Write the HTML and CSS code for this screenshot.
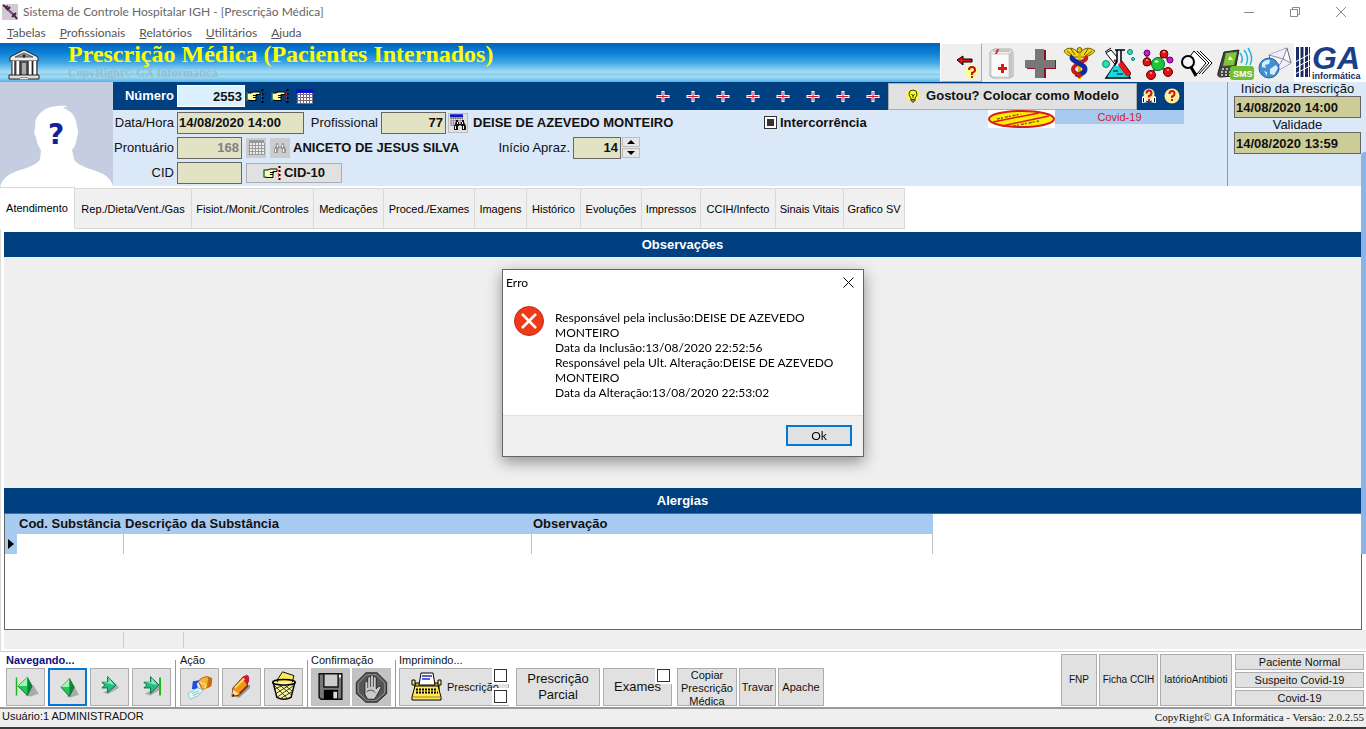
FILE: index.html
```html
<!DOCTYPE html>
<html lang="pt-BR">
<head>
<meta charset="utf-8">
<title>Sistema de Controle Hospitalar IGH - [Prescrição Médica]</title>
<link rel="stylesheet" href="styles.css">
</head>
<body>
<svg class="sprites" aria-hidden="true">
  <symbol id="i-hand" viewBox="0 0 18 14">
    <path d="M1 4h4l2-1h7v2.500h-4v6h-5l-4-.5z" fill="#ffffa0" stroke="#000"/>
    <path d="M7 6.500h4M7 8.500h3" stroke="#000" fill="none"/>
    <path d="M1 3v9" stroke="#2a9" fill="none"/>
    <path d="M16.500 0v14" stroke="#000" stroke-width="2" stroke-dasharray="2 2"/>
    <path d="M15.500 4v7" stroke="#d22" stroke-dasharray="2 1"/>
  </symbol>
  <symbol id="i-cal" viewBox="0 0 17 15">
    <path d="M1 1h15v13h-15z" fill="#fff"/>
    <path d="M.500 5.500h16M.500 8.500h16M.500 11.500h16M.500 14.500h16M1.500 3v12M4.500 3v12M7.500 3v12M10.500 3v12M13.500 3v12M16.500 3v12" stroke="#7d6a78" fill="none"/>
    <path d="M0 0h17v4h-17z" fill="#0a14c8"/>
  </symbol>
  <symbol id="i-calgray" viewBox="0 0 17 15">
    <path d="M1 1h15v13h-15z" fill="#eee"/><path d="M1 0h15v3h-15z" fill="#999"/>
    <path d="M.500 5.500h16M.500 8.500h16M.500 11.500h16M.500 14.500h16M1.500 3v12M4.500 3v12M7.500 3v12M10.500 3v12M13.500 3v12M16.500 3v12" stroke="#999" fill="none"/>
  </symbol>
  <symbol id="i-bino" viewBox="0 0 14 12">
    <path d="M3 1h2v2h1v2h2v-2h1v-2h2v2l2 4v4h-4v-4h-1v-1h-2v1h-1v4h-4v-4l2-4z" fill="currentColor"/>
    <path d="M2.500 7v3M10.500 7v3M4.500 3v2M9.500 3v2" stroke="#fff"/>
  </symbol>
  <symbol id="i-plus" viewBox="0 0 13 11">
    <path d="M5 0h3v4h5v3h-5v4h-3v-4h-5v-3h5z" fill="#fff"/><path d="M6 1h1v4h5v1h-5v4h-1v-4h-5v-1h5z" fill="#d8162c"/>
  </symbol>
</svg>

<header class="titlebar">
  <svg class="app-icon" viewBox="0 0 16 16"><path d="M0 0h16v16h-16z" fill="#cfcbd0"/><path d="M1 1l4 3M3 4l3-2M4 4l8 7M5 6l3-3M10 13l4-4M12 11l3 4" stroke="#4b1d4c" stroke-width="2"/><path d="M6 6l5 4" stroke="#b06a9c"/></svg>
  <span class="title">Sistema de Controle Hospitalar IGH - [Prescrição Médica]</span>
  <button class="win" aria-label="Minimizar"><svg viewBox="0 0 10 10"><path d="M0 5.500h10"/></svg></button>
  <button class="win" aria-label="Restaurar"><svg viewBox="0 0 10 10"><path d="M.500 2.500h7v7h-7zM2.500 2v-1.500h7v7h-2"/></svg></button>
  <button class="win" aria-label="Fechar"><svg viewBox="0 0 10 10"><path d="M0 0l10 10M10 0l-10 10"/></svg></button>
</header>

<nav class="menubar">
  <a href="#"><u>T</u>abelas</a><a href="#"><u>P</u>rofissionais</a><a href="#"><u>R</u>elatórios</a><a href="#"><u>U</u>tilitários</a><a href="#"><u>A</u>juda</a>
</nav>

<div class="banner">
  <svg class="bank" viewBox="0 0 34 32">
    <path d="M17 1l14 7v4h-28v-4z" fill="#eee" stroke="#222"/><path d="M17 4l9 4h-18z" fill="#999" stroke="#555"/><circle cx="17" cy="7" r="1.500" fill="#222"/>
    <path d="M4 12h26v14h-26z" fill="#555"/>
    <path d="M6 12v14M11 12v14M23 12v14M28 12v14" stroke="#fff" stroke-width="3"/><path d="M15 14h4v12h-4z" fill="#aaa"/>
    <path d="M5 12v14M8 12v14M13 12v14M21 12v14M25.500 12v14M30 12v14" stroke="#222"/>
    <path d="M2 26h30v4h-30z" fill="#ddd" stroke="#222"/><path d="M13 26h8v5h-8z" fill="#888"/><path d="M13 27.500h8M13 29.500h8" stroke="#eee"/>
  </svg>
  <div class="banner-text"><h1>Prescrição Médica (Pacientes Internados)</h1><p>CopyRight© GA Informática</p></div>
  <div class="tools">
    <button class="tool exit" aria-label="Sair"><svg viewBox="0 0 39 38"><path d="M37 28a6.500 7 0 1 1-13 0a6.500 7 0 1 1 13 0z" fill="#ffff8c"/><path d="M16 16l6-4v3h9v3h-9v3z" fill="#e01010" stroke="#000"/><path d="M28 26q0-3 3-3t3 3q0 2-3 3v2" fill="none" stroke="#c41010" stroke-width="2"/><path d="M30 32h2v2h-2z" fill="#c41010"/></svg></button>
    <button class="tool" aria-label="Prontuário"><svg viewBox="0 0 39 38"><path d="M8 8l4-3h17l2 4v23l-3 2h-17l-3-2z" fill="#eee" stroke="#aaa"/><path d="M9 10h18v23h-16l-2-2z" fill="#fafafa" stroke="#ccc"/><path d="M27 10l3-3v25l-3 2z" fill="#c4c4c4"/><path d="M11 7h17" stroke="#999"/><path d="M13 10l2-5h2l-2 5z" fill="#d22"/><path d="M19 20h3v3h3v3h-3v3h-3v-3h-3v-3h3z" fill="#e01515"/></svg></button>
    <button class="tool" aria-label="Hospital"><svg viewBox="0 0 39 38"><path d="M16 6h9v10h10v9h-10v9h-9v-9h-10v-9h10z" fill="#900d20"/><path d="M14 5h9v11h11v8h-11v10h-9v-10h-10v-8h10z" fill="#777"/></svg></button>
    <button class="tool" aria-label="Caduceu"><svg viewBox="0 0 39 38"><path d="M18 9C14 3 8 3 4 7c2 4 8 7 14 6M20 9c4-6 10-6 15-2c-3 4-9 7-15 6" fill="#f6d51a" stroke="#6b5900"/><path d="M7 7l5 4M11 5l4 6M32 7l-5 4M28 5l-4 6" stroke="#6b5900"/><path d="M19.500 5v30" stroke="#d8b400" stroke-width="3"/><path d="M13 12c-5 5 12 7 12 13s-6 3-8 8" fill="none" stroke="#152b9c" stroke-width="5"/><path d="M25 12c6 5-12 7-12 13s6 3 8 8" fill="none" stroke="#c71c1c" stroke-width="4"/><path d="M15 18q8 2 10 6" fill="none" stroke="#152b9c" stroke-width="4"/><circle cx="19.500" cy="6" r="2.500" fill="#e7c416" stroke="#6b5900"/></svg></button>
    <button class="tool" aria-label="Laboratório"><svg viewBox="0 0 39 38"><path d="M7 9l5-3 19 22q1 6-5 5z" fill="#fff" stroke="#000"/><path d="M15 16l8 1 8 11q1 6-5 5z" fill="#e11c1c" stroke="#700"/><path d="M16 6h10M18 6v12l-11 16h24l-9-16v-12" fill="#eef" stroke="#000" stroke-width="1.500"/><path d="M15 22h9l6 11h-22z" fill="#18d7e0"/><path d="M22 17l9 12q0 4-4 3l-8-11z" fill="#e11c1c"/><path d="M6 8l6-4M14 27h5M18 30h6" stroke="#000"/><circle cx="31" cy="8" r="2.500" fill="#2de0b0" stroke="#087"/><circle cx="34" cy="15" r="1.500" fill="#2de0b0" stroke="#087"/><circle cx="7" cy="20" r="3.500" fill="#2de0b0" stroke="#087"/></svg></button>
    <button class="tool" aria-label="Moléculas"><svg viewBox="0 0 39 38"><path d="M9 10v8l11 2 5-10 7 7M20 20l9 8M20 20l-7 11" stroke="#666" stroke-width="3" fill="none"/><circle cx="9" cy="9" r="3" fill="#cc18d0" stroke="#606"/><circle cx="9" cy="18" r="4" fill="#e01212" stroke="#600"/><circle cx="26" cy="10" r="4" fill="#e01212" stroke="#600"/><circle cx="32" cy="16" r="3" fill="#cc18d0" stroke="#606"/><circle cx="20" cy="20" r="6.500" fill="#1fc534" stroke="#064"/><circle cx="13" cy="31" r="4.500" fill="#e01212" stroke="#600"/><circle cx="30" cy="28" r="4.500" fill="#e01212" stroke="#600"/><path d="M17 17h3v1h-3zM12 29h2M29 26h2M25 8h2M8 16h2" stroke="#fff" fill="#fff"/></svg></button>
    <button class="tool" aria-label="Pesquisar"><svg viewBox="0 0 39 38"><path d="M23 7l12 12-10 11M20 7l12 12-10 11" fill="#fff" stroke="#000"/><path d="M17 7l12 12-9 11-11-12z" fill="#fff" stroke="#000"/><circle cx="11" cy="18" r="6" fill="#f5f5f5" stroke="#000" stroke-width="2"/><path d="M14 23l5 9" stroke="#000" stroke-width="3"/></svg></button>
    <button class="tool" aria-label="SMS"><svg viewBox="0 0 39 38"><path d="M8 8l15-2-5 26-13 1q-4 0-3-4z" fill="#444" stroke="#222"/><path d="M10 9l11-1-3 13-11 1z" fill="#7dc832"/><path d="M14 12l3 4h-5z" fill="#fff"/><path d="M6 25h10M5 28h10M5 31h9" stroke="#bbb" stroke-width="2" stroke-dasharray="2 2"/><path d="M24 9q4 5 1 10M28 6q6 7 2 15M32 4q6 9 2 17" fill="none" stroke="#23b5d6" stroke-width="1.500"/><rect x="14" y="22" width="24" height="14" rx="3" fill="#6fbe36"/><text class="sms" x="17" y="33">SMS</text></svg></button>
    <button class="tool" aria-label="E-mail"><svg viewBox="0 0 39 38"><path d="M14 11l18-7 4 15-16 9z" fill="#fff" stroke="#667"/><path d="M14 11l14 4 4-11M20 28l8-13 8 4" fill="#eef" stroke="#889"/><circle cx="14" cy="24" r="10" fill="#438fd5" stroke="#2862ab"/><path d="M7 19q4-4 8-3l-1 4-4 1 1 3-4-1zM15 25l6-4 2 3-4 7-4-1zM9 27l3 1v4z" fill="#d8edfa"/></svg></button>
    <div class="logo"><svg viewBox="0 0 72 38"><path d="M2 4h3v30h-3zM6.500 4h3v30h-3zM11 4h3v30h-3zM15 4h1v30h-1z" fill="#182b63"/><path d="M1 19l15-8M1 25l15-8M1 31l15-8" stroke="#fff"/><text class="logo-ga" x="18" y="26">GA</text><text class="logo-inf" x="18" y="36">informática</text></svg></div>
  </div>
</div>

<section class="patient">
  <svg class="avatar" viewBox="0 0 113 104"><path d="M0 0h113v104h-113z" fill="#c5cde1"/><path d="M0 104q3-10 17-15q21-6 23-12l1-9q-4-5-5-13q-3-4-1-9q-1-12 9-18q8-5 24-4l-5 2q13 4 14 19q2 6 0 10q-1 9-5 13l2 9q2 6 22 12q15 5 17 15z" fill="#fff"/><text class="qmark" x="56" y="62">?</text></svg>
  <div class="fields">
    <div class="numbar">
      <label class="lab" for="numero">Número</label><input id="numero" class="in w68 light" value="2553">
      <button class="ic" aria-label="Anterior"><svg width="18" height="14"><use href="#i-hand"/></svg></button>
      <button class="ic" aria-label="Próximo"><svg width="18" height="14"><use href="#i-hand"/></svg></button>
      <button class="ic" aria-label="Calendário"><svg width="17" height="15"><use href="#i-cal"/></svg></button>
      <div class="pluses">
        <svg><use href="#i-plus"/></svg><svg><use href="#i-plus"/></svg><svg><use href="#i-plus"/></svg><svg><use href="#i-plus"/></svg><svg><use href="#i-plus"/></svg><svg><use href="#i-plus"/></svg><svg><use href="#i-plus"/></svg><svg><use href="#i-plus"/></svg>
      </div>
      <button class="btn model"><svg width="14" height="16" viewBox="0 0 14 16"><circle cx="7" cy="7" r="6.500" fill="#ffff28"/><path d="M5 10q-2-2-2-4a4 4 0 0 1 8 0q0 2-2 4v3h-4zM5 11.500h4M7 13v2M5.500 6l1.500 2 1.500-2M7 8v2" fill="none" stroke="#333"/></svg>Gostou? Colocar como Modelo</button>
      <div class="helps">
        <svg width="16" height="16" viewBox="0 0 16 16"><path d="M1 9l3-2h8l3 2v6l-7-1-7 1z" fill="#fff"/><circle cx="8" cy="6" r="5.500" fill="#ffe9a0"/><path d="M2.500 14v-4M13.500 14v-4M5 13l3 1 3-1" stroke="#111" fill="none"/><path d="M5.500 5.500q0-3 2.500-3t2.500 2.500-2.500 3v1.500M8 11v2" fill="none" stroke="#d01515" stroke-width="2"/></svg>
        <svg width="16" height="16" viewBox="0 0 16 16"><circle cx="8" cy="8" r="7.500" fill="#ffef98"/><path d="M5.500 6q0-3 2.500-3t2.500 2.500-2.500 3v1.500M8 11v2" fill="none" stroke="#d01515" stroke-width="2"/></svg>
      </div>
    </div>
    <div class="row">
      <label class="lab" for="data">Data/Hora</label><input id="data" class="in w127 left" value="14/08/2020 14:00">
      <label class="lab prof" for="prof">Profissional</label><input id="prof" class="in w65" value="77">
      <button class="sq" aria-label="Buscar profissional"><svg width="17" height="17" viewBox="0 0 17 17"><use href="#i-cal" width="13" height="12"/><use href="#i-bino" x="3" y="5" width="14" height="12"/></svg></button>
      <b class="who">DEISE DE AZEVEDO MONTEIRO</b>
      <label class="inter"><input type="checkbox" class="tri">Intercorrência</label>
      <div class="covid">
        <svg width="67" height="18" viewBox="0 0 67 18"><path d="M0 0h67v18h-67z" fill="#fff"/><ellipse cx="33.500" cy="9" rx="32.500" ry="8" fill="#ffec00" stroke="#d91c1c" stroke-width="2"/><path d="M5 12l46-9M14 16l47-10" stroke="#d91c1c" stroke-width="1.500"/><path d="M9 9l24-5M25 16l26-5" stroke="#76601c" stroke-width="1.500" stroke-dasharray="3 1 2 2"/></svg>
        <span>Covid-19</span>
      </div>
    </div>
    <div class="row">
      <label class="lab" for="pront">Prontuário</label><input id="pront" class="in w65 dim" value="168">
      <button class="sq off" aria-label="Calendário"><svg width="17" height="15"><use href="#i-calgray"/></svg></button>
      <button class="sq off" aria-label="Buscar"><svg width="14" height="12"><use href="#i-bino"/></svg></button>
      <b class="pac">ANICETO DE JESUS SILVA</b>
      <label class="lab apraz" for="apraz">Início Apraz.</label><input id="apraz" class="in w48" value="14">
      <div class="spin"><button aria-label="Mais"><svg width="8" height="4" viewBox="0 0 8 4"><path d="M0 4l4-4 4 4z"/></svg></button><button aria-label="Menos"><svg width="8" height="4" viewBox="0 0 8 4"><path d="M0 0l4 4 4-4z"/></svg></button></div>
    </div>
    <div class="row">
      <label class="lab" for="cid">CID</label><input id="cid" class="in w65" value="">
      <button class="btn cid"><svg width="18" height="14"><use href="#i-hand"/></svg>CID-10</button>
    </div>
  </div>
  <div class="valid">
    <label for="ini">Inicio da Prescrição</label><input id="ini" class="in left khaki" value="14/08/2020 14:00">
    <label for="val">Validade</label><input id="val" class="in left khaki" value="14/08/2020 13:59">
  </div>
</section>

<main class="page">
  <div class="tabs" role="tablist">
    <button role="tab" aria-selected="true">Atendimento</button><button role="tab">Rep./Dieta/Vent./Gas</button><button role="tab">Fisiot./Monit./Controles</button><button role="tab">Medicações</button><button role="tab">Proced./Exames</button><button role="tab">Imagens</button><button role="tab">Histórico</button><button role="tab">Evoluções</button><button role="tab">Impressos</button><button role="tab">CCIH/Infecto</button><button role="tab">Sinais Vitais</button><button role="tab">Grafico SV</button>
  </div>
  <h2 class="bar">Observações</h2>
  <div class="obs"></div>
  <h2 class="bar">Alergias</h2>
  <div class="tablebox">
    <table>
      <thead><tr><th class="mark"></th><th class="c1">Cod. Substância</th><th class="c2">Descrição da Substância</th><th>Observação</th></tr></thead>
      <tbody><tr><td class="mark"><svg width="6" height="10" viewBox="0 0 6 10"><path d="M0 0l6 5-6 5z"/></svg></td><td></td><td></td><td></td></tr></tbody>
    </table>
  </div>
  <div class="strip"><i></i><i></i></div>
  <div class="scroll"></div>
</main>

<footer class="bottom">
  <fieldset class="grp nav"><legend>Navegando...</legend>
    <button class="big" aria-label="Primeiro"><svg viewBox="0 0 38 38"><path d="M19 28l8-11 6 9-9 3z" fill="#aaa"/><path d="M9.500 9v19" stroke="#14b814" stroke-width="1.500"/><path d="M11 18l10-9 5 9-5 10z" fill="#23c553" stroke="#087225"/><path d="M11 18l10-9v9z" fill="#9ef5b0"/><path d="M21 9l5 9-5 10z" fill="#0b8440"/></svg></button>
    <button class="big focus" aria-label="Anterior"><svg viewBox="0 0 38 38"><path d="M17 28l8-11 5 9-9 3z" fill="#aaa"/><path d="M11 18l9-9 5 9-5 10z" fill="#23c553" stroke="#087225"/><path d="M11 18l9-9v9z" fill="#9ef5b0"/><path d="M20 9l5 9-5 10z" fill="#0b8440"/></svg></button>
    <button class="big" aria-label="Próximo"><svg viewBox="0 0 38 38"><path d="M12 25l15-8 2 3-11 6z" fill="#aaa"/><path d="M11 14h6v-6l9 9-9 8v-5h-6l3-3z" fill="#25bd80" stroke="#08713d"/><path d="M12 14h6v-5l6 8z" fill="#8be9bd"/></svg></button>
    <button class="big" aria-label="Último"><svg viewBox="0 0 38 38"><path d="M12 26l15-8 2 3-11 7z" fill="#aaa"/><path d="M11 14h7v-6l9 9-9 9v-6h-7l3-3z" fill="#25bd80" stroke="#08713d"/><path d="M12 14h7v-5l6 8z" fill="#8be9bd"/><path d="M28 9v19" stroke="#14b814" stroke-width="2"/></svg></button>
  </fieldset>
  <fieldset class="grp"><legend>Ação</legend>
    <button class="big" aria-label="Novo"><svg viewBox="0 0 38 38"><path d="M18 13q2-4 9-5l5 2-1 8-9 4z" fill="#f4b53a" stroke="#b05d05"/><path d="M28 8l4 2-1 8-4 2z" fill="#c56d10"/><path d="M19 14l6 2v5" fill="none" stroke="#fff1a0"/><path d="M11 21l1-8 7-1-3 4 2 5z" fill="#1f4fe0"/><path d="M7 26l10-6 6 2-5 6-9 4z" fill="#e8f9fc" stroke="#89c4cf"/><path d="M11 26l7-3M12 28l7-3" stroke="#7bb"/></svg></button>
    <button class="big" aria-label="Editar"><svg viewBox="0 0 38 38"><path d="M13 30l15-14v4l-11 10z" fill="#999"/><path d="M10 20l11-12 5 3-1 8-9 9-7 1z" fill="#f29520" stroke="#582800"/><path d="M20 9l4-3q4 0 3 7l-3 3z" fill="#d31540"/><path d="M9 29l1-7 6 4z" fill="#ffe2a8"/><path d="M9 29l1-3 2 2z" fill="#000"/><path d="M12 20l10-10" stroke="#ffdc40" stroke-width="2"/><path d="M17 26l9-9" stroke="#8a3410" stroke-width="2"/></svg></button>
    <button class="big" aria-label="Excluir"><svg viewBox="0 0 38 38"><path d="M12 12l6-9 12 4-2 8-14 2z" fill="#ffe95b" stroke="#000"/><path d="M8 14l4 16q7 4 15 0l4-16" fill="#fff79a" stroke="#000" stroke-width="1.500"/><path d="M9 17l14 14M11 26l14-9M14 16l14 12M12 30l17-12M19 16l10 8M10 21l9-4M16 31l12-7" stroke="#333" fill="none"/><ellipse cx="19.500" cy="14" rx="12" ry="3" fill="none" stroke="#000" stroke-width="1.500"/></svg></button>
  </fieldset>
  <fieldset class="grp conf"><legend>Confirmação</legend>
    <button class="big dark" aria-label="Salvar"><svg viewBox="0 0 38 38"><path d="M7 5h24v27h-22l-2-2z" fill="#777" stroke="#111" stroke-width="1.500"/><path d="M12 5h15v14h-15z" fill="#ccc" stroke="#111" stroke-width="1.500"/><path d="M12 22h15v10h-15z" fill="#000"/><path d="M22 24h4v7h-4z" fill="#ddd"/><path d="M28 6h2v3h-2z" fill="#fff"/></svg></button>
    <button class="big dark" aria-label="Cancelar"><svg viewBox="0 0 38 38"><path d="M13 4h12l10 10v12l-10 9h-12l-10-9v-12z" fill="#555" stroke="#222"/><path d="M14 6h10l9 9v10l-9 8h-10l-9-8v-10z" fill="none" stroke="#999"/><path d="M12 14q2-2 3 0v-5q2-2 3 0v-2q2-2 3 0v2q2-2 3 0v12l3-3q3 0 2 2l-5 9-2 3h-7l-3-5z" fill="#c9c9c9" stroke="#222"/><path d="M15 14v6M18 9v10M21 9v10M14 24q5-4 9 1" fill="none" stroke="#444"/></svg></button>
  </fieldset>
  <fieldset class="grp print"><legend>Imprimindo...</legend>
    <div class="holder">
      <button class="btn presc"><svg width="33" height="30" viewBox="0 0 33 30"><path d="M5 11h24v8h-24z" fill="#d8b928" stroke="#000"/><path d="M2 8h3v5h-3zM28 8h3v5h-3z" fill="#ffe95b" stroke="#000"/><path d="M9 13l2-12h12l2 12z" fill="#fff" stroke="#000"/><path d="M12 4h10M12 7h8" stroke="#1530c8" stroke-width="1.500"/><path d="M5 14h23l3 11v3h-29v-3z" fill="#ffe95b" stroke="#000"/><path d="M6 17.500h21M6 20.500h22" stroke="#000" stroke-width="2" stroke-dasharray="2 1"/><path d="M3 25h27" stroke="#a58100"/></svg>Prescrição</button>
      <div class="checks"><input type="checkbox" aria-label="Opção 1"><input type="checkbox" aria-label="Opção 2"></div>
    </div>
    <button class="btn parc">Prescrição Parcial</button>
    <div class="holder"><button class="btn exam">Exames</button><div class="checks"><input type="checkbox" aria-label="Exames"></div></div>
    <button class="btn copy">Copiar Prescrição Médica</button>
    <button class="btn trav">Travar</button>
    <button class="btn apac">Apache</button>
  </fieldset>
  <div class="right">
    <button class="btn fnp">FNP</button><button class="btn ccih">Ficha CCIH</button><button class="btn rel" aria-label="Relatório Antibiótico">latórioAntibioti</button>
    <div class="stack"><button class="btn">Paciente Normal</button><button class="btn">Suspeito Covid-19</button><button class="btn">Covid-19</button></div>
  </div>
</footer>
<div class="status"><span>Usuário:1 ADMINISTRADOR</span><span class="copyr">CopyRight© GA Informática - Versão: 2.0.2.55</span></div>

<div class="overlay">
  <div class="dialog" role="dialog" aria-labelledby="dt">
    <div class="dtitle"><span id="dt">Erro</span><button aria-label="Fechar"><svg width="11" height="11" viewBox="0 0 11 11"><path d="M.500 .500l10 10M10.500 .500l-10 10" stroke="#000"/></svg></button></div>
    <div class="dbody">
      <svg width="30" height="30" viewBox="0 0 30 30"><circle cx="15" cy="15" r="14.500" fill="#f03a17" stroke="#b3321b"/><path d="M8 8l14 14M22 8l-14 14" stroke="#fff" stroke-width="2.500"/></svg>
      <p>Responsável pela inclusão:DEISE DE AZEVEDO<br>MONTEIRO<br>Data da Inclusão:13/08/2020 22:52:56<br>Responsável pela Ult. Alteração:DEISE DE AZEVEDO<br>MONTEIRO<br>Data da Alteração:13/08/2020 22:53:02</p>
    </div>
    <div class="dfoot"><button>Ok</button></div>
  </div>
</div>
</body>
</html>
```
FILE: styles.css
```css
* { box-sizing: border-box; }
body {
  margin: 0;
  min-height: 100vh;
  display: flex;
  flex-direction: column;
  background: #fff;
  font: 13px/16px "Liberation Sans", sans-serif;
  color: #111;
}
button, input { font: inherit; color: inherit; margin: 0; padding: 0; border-radius: 0; }
button { cursor: default; }
svg { display: block; flex: none; }
.sprites { position: absolute; width: 0; height: 0; }

.titlebar { display: flex; align-items: center; height: 24px; padding: 0 2px; font: 12px/16px Lato, sans-serif; color: #666; }
.app-icon { width: 16px; height: 16px; }
.title { flex: 1; padding-left: 5px; white-space: nowrap; }
.win { width: 46px; height: 22px; border: 0; background: none; display: grid; place-items: center; }
.win svg { width: 10px; height: 10px; fill: none; stroke: #888; }

.menubar { display: flex; gap: 14px; height: 19px; padding: 0 7px; font: 12px/18px Lato, sans-serif; }
.menubar a { color: #555; text-decoration: none; }

.banner {
  display: flex;
  height: 39px;
  background: linear-gradient(#0263bc, #0c80d4 25%, #3fa5e4 50%, #a6dff6 75%, #86ccef 80%, #a3def5 86%, #53b4ea);
}
.bank { width: 34px; height: 32px; margin: 6px 27px 0 7px; }
.banner-text { flex: 1; white-space: nowrap; font-family: "Liberation Serif", serif; font-weight: bold; }
.banner-text h1 { margin: 0; font-size: 24px; line-height: 23px; color: #ffff00; }
.banner-text p { margin: 0; font-size: 12px; line-height: 14px; color: #98bdcc; }
.tools { display: flex; background: #efefef; }
.tool { width: 39px; height: 39px; border: 0; background: none; }
.tool.exit { width: 42px; border: 1px solid #fff; border-right-color: #aaa; border-bottom-color: #aaa; }
.tool svg { width: 39px; height: 38px; }
.sms { font: bold 9px "Liberation Sans", sans-serif; fill: #fff; }
.logo { width: 72px; background: #fff; }
.logo svg { width: 72px; height: 38px; }
.logo-ga { font: italic bold 32px "Liberation Sans", sans-serif; fill: #1c3f87; }
.logo-inf { font: bold 9px "Liberation Sans", sans-serif; fill: #182b63; }

.patient { display: flex; height: 104px; background: #dbe8f8; }
.avatar { width: 113px; height: 104px; }
.qmark { font: bold 28px "DejaVu Sans", sans-serif; fill: #16209a; text-anchor: middle; }
.fields { flex: 1; padding-right: 43px; min-width: 0; white-space: nowrap; }
.numbar { display: flex; align-items: center; height: 28px; background: #003f80; font-weight: bold; }
.numbar .lab { color: #fff; }
.lab { width: 64px; padding-right: 3px; text-align: right; }
.in { height: 22px; border: 1px solid #666; background: #e2e2c4; font-weight: bold; text-align: right; padding: 0 2px; }
.left { text-align: left; padding: 0 1px; }
.light { background: #dcf1ff; border-color: #fff; }
.dim { color: #808080; }
.khaki { background: #cccc99; width: 127px; }
.w48 { width: 48px; }
.w65 { width: 65px; }
.w68 { width: 68px; }
.w127 { width: 127px; }
.ic { width: 25px; height: 18px; border: 0; background: none; display: grid; align-items: center; padding-left: 1px; }
.pluses { display: flex; margin-left: auto; }
.pluses svg { width: 30px; height: 11px; }
.btn { border: 1px solid #adadad; background: #e1e1e1; }
.model { width: 249px; height: 27px; display: flex; align-items: center; justify-content: center; gap: 6px; font-weight: bold; }
.helps { display: flex; width: 47px; gap: 7px; padding-left: 4px; }
.row { display: flex; align-items: center; height: 25px; }
.prof { width: 77px; }
.apraz { width: 109px; }
.sq { width: 20px; height: 20px; margin: 0 2px; border: 1px solid #bbb; background: #e1e1e1; display: grid; place-items: center; color: #111; }
.off { margin: 0 0 0 4px; background: #ccc; border-color: #ccc; color: #999; }
.who { width: 294px; padding-left: 3px; }
.pac { width: 174px; padding-left: 3px; }
.inter { display: flex; align-items: center; gap: 3px; font-weight: bold; }
.tri { appearance: none; width: 13px; height: 13px; border: 1px solid #333; background: #333; box-shadow: inset 0 0 0 2px #fff; }
.covid { display: flex; align-self: flex-start; margin-left: auto; height: 14px; font-size: 11px; line-height: 15px; color: #d8162c; }
.covid span { width: 129px; background: #a6caf0; text-align: center; }
.spin { display: flex; flex-direction: column; gap: 1px; padding-left: 1px; }
.spin button { width: 18px; height: 10px; border: 1px solid #bbb; background: #e6e6e6; display: grid; place-items: center; }
.cid { width: 96px; height: 20px; margin-left: 4px; display: flex; align-items: center; justify-content: center; gap: 3px; font-weight: bold; }
.valid { width: 139px; border-left: 1px solid #999; display: flex; flex-direction: column; padding-left: 6px; line-height: 14px; }
.valid label { width: 127px; text-align: center; }

.page { flex: 1; display: flex; flex-direction: column; position: relative; padding: 1px 5px 0 4px; border-left: 1px solid #ddd; }
.tabs { display: grid; grid-template-columns: 75px 117px 122px 70px 91px 52px 54px 61px 59px 75px 68px 61px; height: 42px; margin: 0 0 3px -5px; align-items: end; font-size: 11px; }
.tabs button { height: 41px; border: 1px solid #d9d9d9; border-left: 0; background: #f0f0f0; white-space: nowrap; color: #000; }
.tabs button[aria-selected] { height: 42px; background: #fff; border-bottom-color: #fff; }
.bar { margin: 0 0 0 -1px; height: 25px; background: #003f80; color: #fff; font-size: 13px; line-height: 25px; text-align: center; }
.obs { flex: 1; background: #efefef; margin-left: -1px; }
.tablebox { height: 117px; margin: 0 -1px 0 -1px; border: 1px solid #666; background: #fff; }
table { border-collapse: collapse; table-layout: fixed; width: 928px; }
th { height: 20px; padding: 0 2px; background: #a6caf0; text-align: left; white-space: nowrap; }
td { height: 20px; padding: 0; border-right: 1px solid #c0c0c0; }
.mark { width: 12px; background: #a6caf0; border: 0; padding: 0 3px; }
.c1 { width: 106px; }
.c2 { width: 408px; }
.strip { display: flex; height: 21px; margin: 0 -5px 0 -1px; background: #efefef; border-bottom: 2px solid #fff; }
.strip i { width: 120px; border-right: 1px solid #ccc; margin: 2px 0 1px; }
.strip i + i { width: 60px; }
.scroll { position: absolute; right: 0; top: -34px; bottom: 97px; width: 5px; background: #8ab4e8; border-radius: 4px 0 0 0; }

.bottom { display: flex; height: 58px; border-top: 1px solid #ccc; border-bottom: 2px solid #999; background: #fff; font-size: 11px; line-height: 14px; }
.grp { display: flex; gap: 3px; align-items: flex-start; margin: 0; padding: 0 4px; border: 0; border-right: 1px solid #999; min-width: 0; }
.grp legend { height: 16px; padding: 1px 0 0; }
.nav { padding-left: 6px; }
.nav legend { font-weight: bold; color: #101080; }
.conf { padding: 0 4px 0 3px; gap: 2px; }
.big { width: 39px; height: 38px; border: 1px solid #adadad; background: #e1e1e1; display: grid; place-items: center; }
.big svg { width: 37px; height: 36px; }
.focus { border: 2px solid #0078d7; }
.dark { background: #c3c3c3; border-color: #bfbfbf; }
.print { border: 0; gap: 2px; padding-left: 3px; }
.holder { position: relative; margin-right: 1px; }
.presc { width: 110px; height: 38px; display: flex; align-items: center; gap: 4px; padding-left: 10px; }
.parc { width: 84px; height: 38px; margin: 0 1px 0 4px; font-size: 13px; line-height: 16px; }
.exam { width: 69px; height: 38px; font-size: 13px; }
.copy { width: 60px; height: 38px; margin-left: 2px; line-height: 13px; }
.trav { width: 37px; height: 38px; }
.apac { width: 46px; height: 38px; }
.checks { position: absolute; top: 1px; right: 2px; width: 13px; display: flex; flex-direction: column; gap: 8px; }
.checks input { appearance: none; width: 13px; height: 13px; border: 1px solid #333; background: #fff; outline: 2px solid #fff; }
.right { display: flex; gap: 2px; margin-left: auto; padding: 2px 2px 1px 0; font-size: 10px; }
.fnp { width: 36px; }
.ccih { width: 59px; white-space: nowrap; }
.rel { width: 72px; white-space: nowrap; }
.stack { width: 130px; display: flex; flex-direction: column; gap: 2px; font-size: 11px; padding-left: 1px; }
.stack .btn { flex: 1; line-height: 13px; }

.status { display: flex; justify-content: space-between; height: 20px; padding: 0 2px; background: #efefef; border-bottom: 2px solid #3a3a3a; font-size: 11px; line-height: 14px; }
.copyr { font-family: "Liberation Serif", serif; line-height: 16px; }

.overlay { position: fixed; inset: 0; display: flex; align-items: center; justify-content: center; padding-bottom: 3px; }
.dialog { width: 362px; background: #fff; border: 1px solid #666; box-shadow: 0 5px 14px rgba(0, 0, 0, .4); font: 12px/15px Lato, sans-serif; color: #000; }
.dtitle { display: flex; justify-content: space-between; align-items: center; height: 24px; padding: 0 9px 0 3px; }
.dtitle button { border: 0; background: none; }
.dbody { display: flex; gap: 11px; padding: 12px 0 15px 11px; }
.dbody p { margin: 4px 0 0; white-space: nowrap; }
.dfoot { display: flex; justify-content: flex-end; padding: 9px 11px 10px; background: #f0f0f0; border-top: 1px solid #dfdfdf; }
.dfoot button { width: 66px; height: 21px; border: 2px solid #0078d7; background: #e1e1e1; line-height: 16px; }
```
